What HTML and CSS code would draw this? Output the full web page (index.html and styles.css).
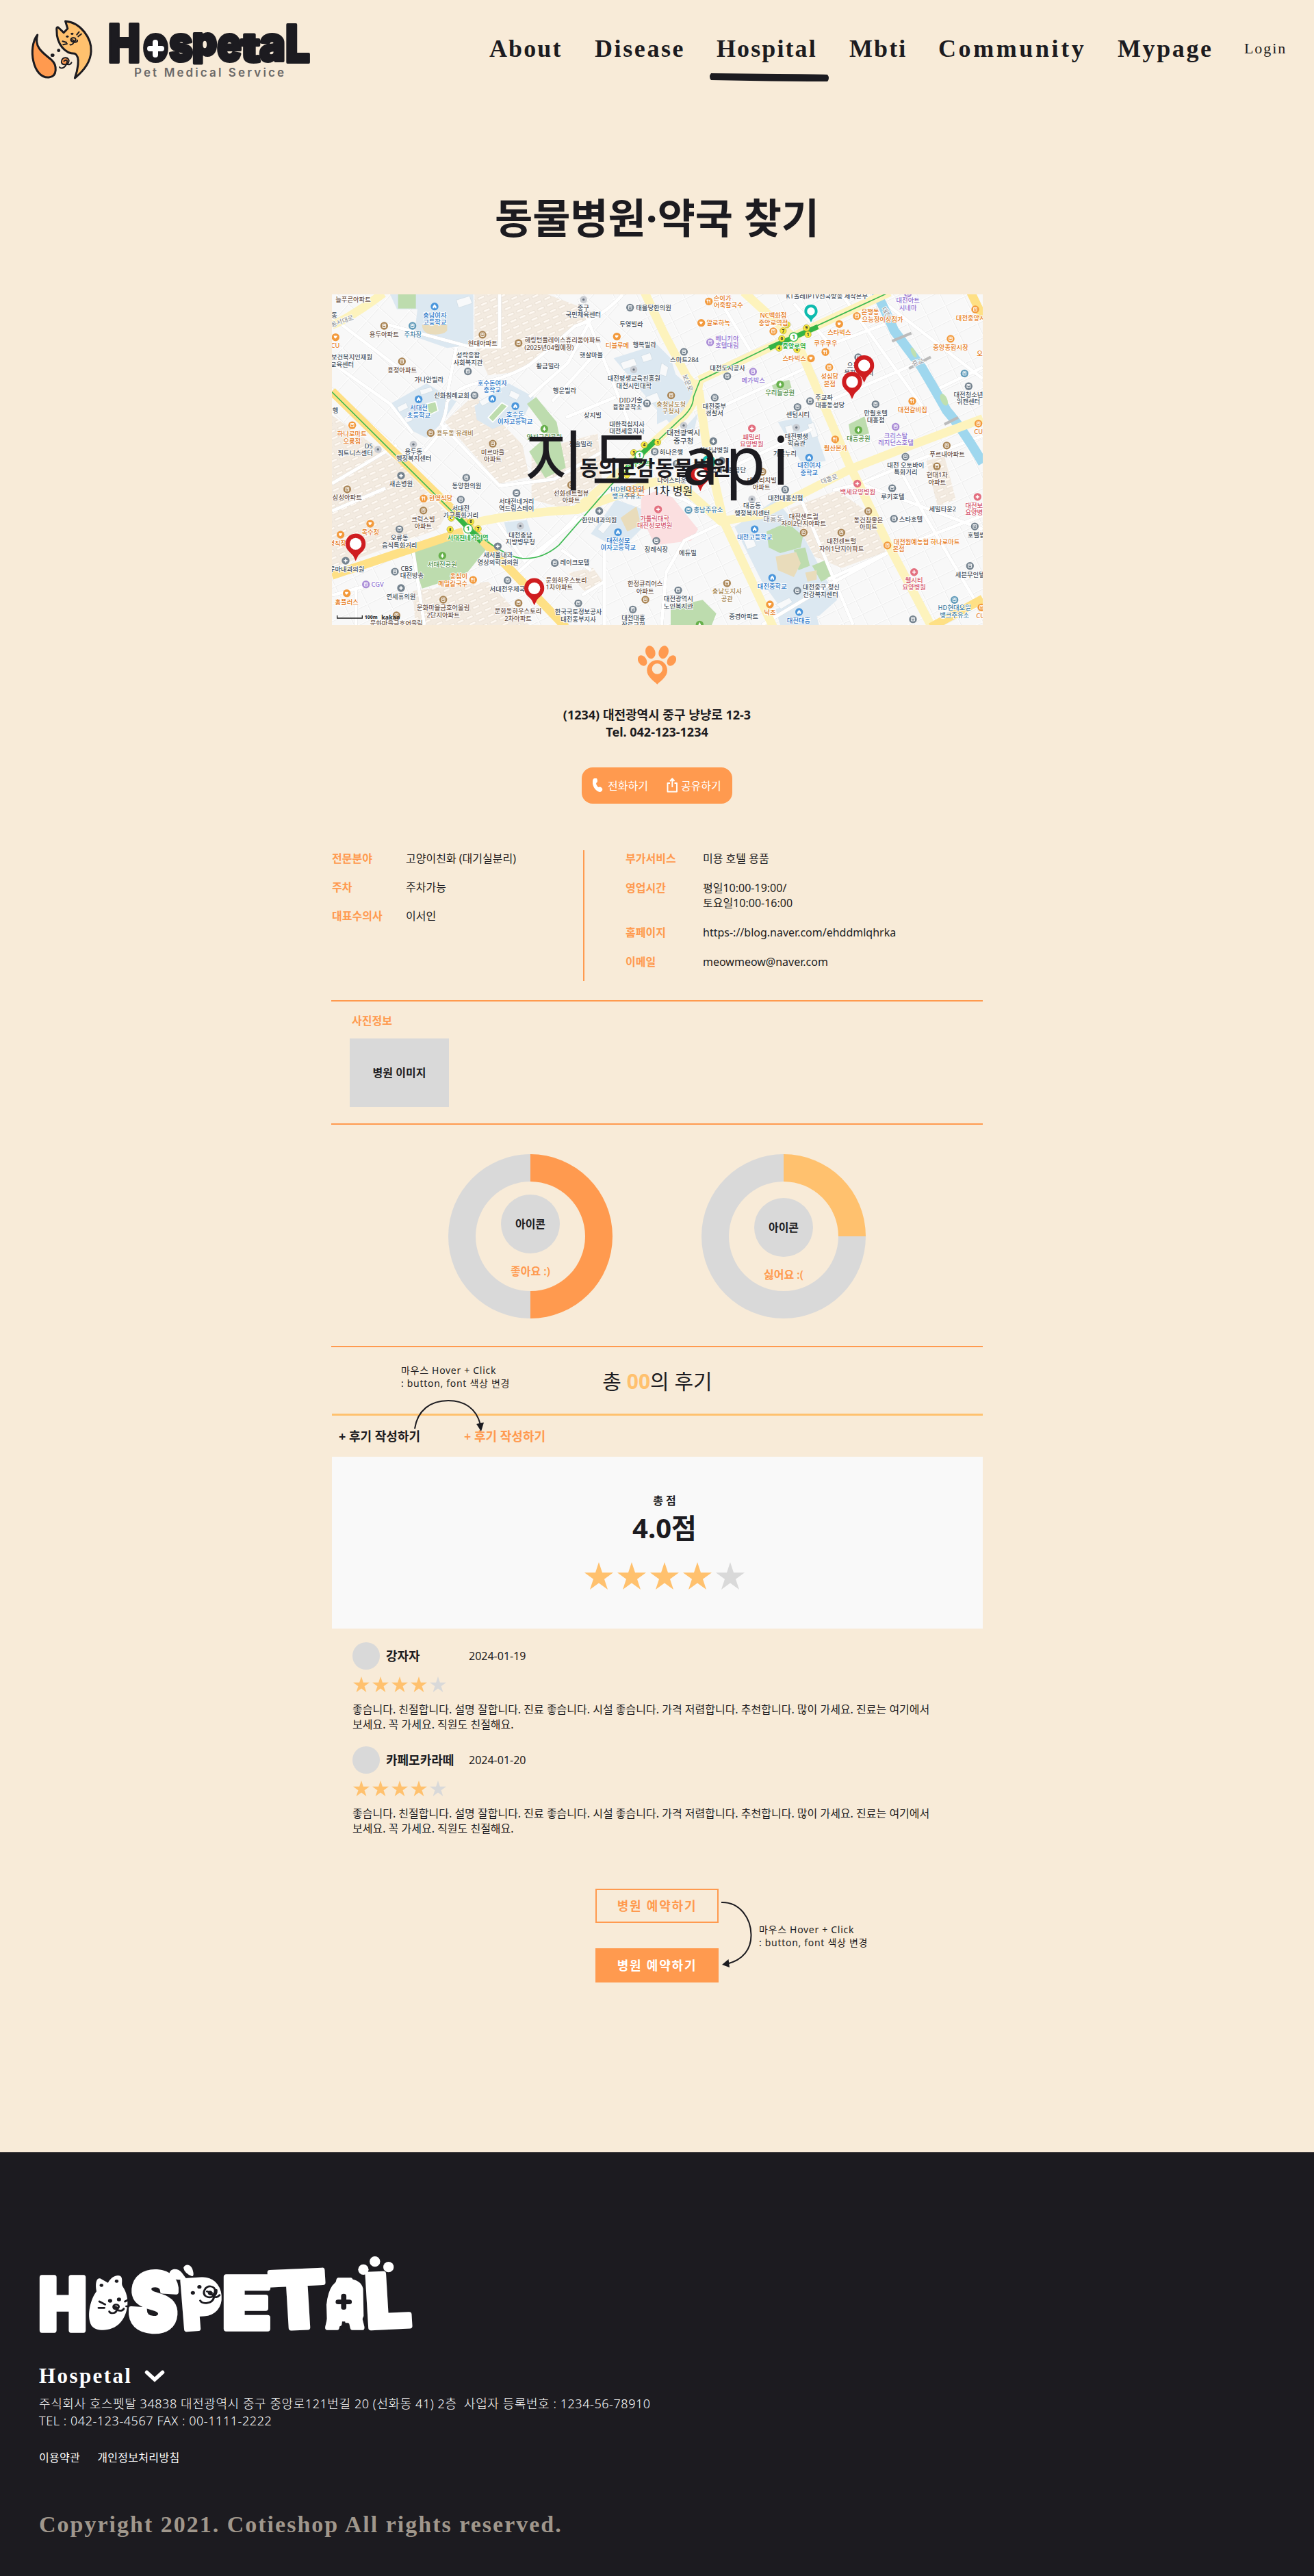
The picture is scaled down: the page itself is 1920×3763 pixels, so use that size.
FILE: index.html
```html
<!DOCTYPE html>
<html lang="ko">
<head>
<meta charset="utf-8">
<title>Hospetal</title>
<link rel="stylesheet" href="styles.css">
</head>
<body>
<header class="header">
  <svg class="logo" width="480" height="144" viewBox="0 0 480 144" role="img" aria-label="Hospetal">
    <g transform="scale(.4082 .3333)" class="mark">
      <path class="cat" d="M234 93C290 98 329 170 326 225C324 280 292 318 268 342C276 315 290 248 268 235C235 236 202 195 203 133C201 118 207 117 211 123L228 143L242 125Z"/>
      <path class="ear" d="M134 153C98 208 118 345 175 339C206 335 205 285 184 262C160 237 120 210 134 153Z"/>
      <g class="ln"><path d="M275 152l8-12M280 160l11-11M224 181l14 5M226 196l14-4"/><path d="M254 178c-5-12 15-18 17-6c1 12-15 14-17 6c6-6 13-2 9 10c-3 8-10 9-12 8M264 184c8 4 14-2 13-8"/></g>
      <path class="nose" d="M220 272c-1-28 32-22 26-1c-5 17-25 15-26 1z"/>
      <path class="ln" d="M229 268c8-8 15-6 9 12c-7 22-22 20-25 14M238 279c8 8 16 2 18-5"/>
      <g class="dots"><ellipse cx="241" cy="160" rx="5" ry="5"/><ellipse cx="258" cy="148" rx="5" ry="5"/><ellipse cx="188" cy="242" rx="7" ry="7"/><ellipse cx="210" cy="221" rx="6" ry="7"/></g>
    </g>
    <g class="word">
      <text x="158" y="91" font-size="77" textLength="47" lengthAdjust="spacingAndGlyphs">H</text>
      <text x="209" y="89" font-size="71" textLength="37" lengthAdjust="spacingAndGlyphs">o</text>
      <text x="247" y="89" font-size="71" textLength="35" lengthAdjust="spacingAndGlyphs">s</text>
      <text x="281" y="81" font-size="58" textLength="36" lengthAdjust="spacingAndGlyphs">p</text>
      <text x="317" y="89" font-size="71" textLength="36" lengthAdjust="spacingAndGlyphs">e</text>
      <text x="352" y="90" font-size="58" textLength="28" lengthAdjust="spacingAndGlyphs">t</text>
      <text x="379" y="89" font-size="71" textLength="38" lengthAdjust="spacingAndGlyphs">a</text>
      <text x="417" y="91" font-size="75" textLength="36" lengthAdjust="spacingAndGlyphs">L</text>
    </g>
    <ellipse cx="227" cy="70" rx="14" ry="18" fill="#1c1b20"/>
    <path d="M227 62v18M219 71h17" stroke="#fff" stroke-width="8" stroke-linecap="round"/>
    <text class="tag" x="196" y="112" textLength="219">Pet Medical Service</text>
  </svg>
  <nav class="nav">
    <a>About</a><a class="w1">Disease</a><a class="on">Hospital<svg width="176" height="14" viewBox="0 0 176 14"><path d="M3 0L100 1Q150 1 173 2Q177 7 173 12Q120 12 60 11L3 10Q-1 5 3 0Z" fill="#1c1b20"/></svg></a><a>Mbti</a><a class="w2">Community</a><a class="w1">Mypage</a><a class="login">Login</a>
  </nav>
</header>

<main class="main">
  <h1>동물병원·약국 찾기</h1>

  <div class="map">
    <svg width="951" height="483" viewBox="15 30 2853 1450" preserveAspectRatio="none">
      <defs>
        <pattern id="blk" width="92" height="66" patternUnits="userSpaceOnUse" patternTransform="rotate(-26)"><rect width="92" height="66" fill="#f8f8f8"/><path d="M0 0H92M0 0V66" stroke="#e2e2e2" stroke-width="10"/><path d="M0 0H92M0 0V66" stroke="#fff" stroke-width="7"/></pattern>
        <pattern id="blk2" width="80" height="110" patternUnits="userSpaceOnUse" patternTransform="rotate(-48)"><rect width="80" height="110" fill="#f8f8f8"/><path d="M0 0H80M0 0V110" stroke="#e2e2e2" stroke-width="10"/><path d="M0 0H80M0 0V110" stroke="#fff" stroke-width="7"/></pattern>
        <pattern id="apt" width="44" height="30" patternUnits="userSpaceOnUse" patternTransform="rotate(-24)"><rect width="44" height="30" fill="#f3ebe1"/><rect x="6" y="8" width="30" height="10" fill="#fffaf4" stroke="#e4dacd" stroke-width="2"/></pattern>
        <g id="b"><circle cx="18" cy="18" r="17" fill="currentColor"/><path d="M11 10h14v15H11zM18 11v5M13 16h10" fill="none" stroke="#fff" stroke-width="3"/></g>
        <g id="h"><circle cx="18" cy="18" r="17" fill="currentColor"/><path d="M18 10v16M10 18h16" stroke="#fff" stroke-width="5"/></g>
        <g id="s"><circle cx="18" cy="18" r="17" fill="currentColor"/><path d="M18 8l8 10v8h-6v-5h-4v5h-6v-8z" fill="#fff"/></g>
        <g id="t"><circle cx="18" cy="18" r="17" fill="currentColor"/><path d="M18 7l7 15h-5v5h-4v-5h-5z" fill="#fff"/></g>
        <g id="f"><circle cx="18" cy="18" r="17" fill="currentColor"/><path d="M13 9v18M10 10v6h6v-6M23 27V10q-4 4-2 8" fill="none" stroke="#fff" stroke-width="3"/></g>
        <g id="c"><circle cx="18" cy="18" r="17" fill="currentColor"/><path d="M10 12h12q6 1 0 7q-2 5-6 5q-6-2-6-12z" fill="#fff"/></g>
        <g id="o"><circle cx="18" cy="18" r="16" fill="#c9ccd2"/><circle cx="18" cy="18" r="5" fill="#6a7480"/></g>
        <symbol id="pin" viewBox="0 0 90 122"><path d="M45 1C20 1 1 20 1 46C1 72 22 84 34 98L45 121L56 98C68 84 89 72 89 46C89 20 70 1 45 1Z" fill="currentColor"/><circle cx="45" cy="46" r="26" fill="#fff"/></symbol>
      </defs>
      <rect x="15" y="30" width="2853" height="1450" fill="url(#blk2)"/>
      <path d="M1210 30H2868V1480H1130L1300 1000L1620 450L1420 200ZM15 1260L500 1120L860 1260L1000 1480H15Z" fill="url(#blk)"/>
      <g class="apt">
        <path d="M640 30H960L1170 110L980 250L830 370L700 385L655 290L640 240ZM15 560L310 770L520 990L480 1060L15 1230ZM510 590L640 470L850 690L880 830L750 860ZM370 1330L700 1290L880 1480H380ZM890 720L1180 640L1200 850L1040 970L890 930ZM2020 970L2230 890L2430 1030L2440 1160L2250 1230L2130 1180ZM2620 760L2700 740L2750 930L2670 960ZM1050 1250L1160 1230L1210 1300L1120 1330Z"/>
      </g>
      <g fill="#dce8f1">
        <path d="M270 30H635V250L520 265L375 215L390 95L300 95ZM270 510L430 420L560 500L500 590L430 660L370 630L310 560ZM640 520L790 420L900 480L860 560L720 620L650 580ZM1250 310L1440 250L1500 310L1540 440L1620 450L1590 540L1500 600L1410 500ZM770 1030L870 1020L900 1110L800 1140ZM1440 280L1520 380L1590 440L1560 540L1440 600ZM1620 550L1600 640L1540 640ZM1970 590L2110 560L2180 760L2080 780ZM1780 1050L1960 930L2060 1050L2230 1370L2150 1440L2000 1430L1900 1290ZM1960 1410L2120 1360L2150 1480H1980ZM1150 1080L1260 930L1370 970L1380 1050L1280 1150Z"/>
      </g>
      <g fill="#f8f9fa" stroke="#ccd9e3" stroke-width="2">
        <path d="M560 55l58-18l12 32l-60 20zM300 525l40-20l10 22l-40 20zM400 450l50-14l8 18l-52 18zM330 570l30-12l10 24l-30 12zM660 500l40-24l14 22l-40 22zM800 450l40 20l-14 24l-36-18zM1280 330l60-20l12 30l-60 20zM1370 300l40-14l10 30l-40 12zM1390 480l50-20l14 34l-46 20zM1460 330l30 20l-10 40l-30-10zM2000 610l30-8l24 80l-28 8zM2100 600l26-8l20 60l-26 8zM1820 1110l40-16l16 40l-40 14zM1960 1390l60-30l14 20l-50 30zM2000 1060l30-14l20 40l-30 14zM1180 1060l40-50l24 20l-40 50z"/>
      </g>
      <g fill="#bddcae">
        <path d="M870 510L910 480L1000 590L1040 790L950 835L880 720L960 650L930 590ZM360 1160L480 1110L640 1095L690 1150L600 1260L410 1320ZM1920 1070L2010 1030L2080 1090L2070 1140L1980 1165L1930 1140ZM1940 420L2020 405L2030 440L1960 470ZM2280 600L2350 565L2370 640L2290 660ZM1500 1400L1640 1370L1700 1430L1680 1480H1500ZM2120 1220L2180 1195L2215 1260L2160 1290ZM2040 1150L2090 1140L2110 1220L2060 1240Z"/>
        <rect x="305" y="30" width="78" height="62"/>
        <path d="M700 570L760 505L785 520L720 590ZM430 510L470 500L480 540L440 560Z" stroke="#fff" stroke-width="5"/>
      </g>
      <path d="M410 160H520V190Q500 210 450 205Q410 200 410 160ZM1960 1180L2050 1160L2070 1210L2040 1270L1970 1240ZM1280 1010L1350 960L1370 1040L1310 1070ZM2090 1250L2140 1240V1280L2100 1290Z" fill="#e9dcbb"/>
      <path d="M1370 920L1440 890L1500 910L1620 1060L1590 1110L1430 1130L1370 1000Z" fill="#fbdfe0"/>
      <g class="wr"><path d="M520 500Q560 440 650 420Q780 400 880 340Q980 260 1080 170Q1200 130 1290 30M520 500Q515 560 495 600L750 870L990 840L1200 720M15 860L300 690M15 980L250 880M420 720L520 600M15 330L270 510L370 640M15 130L330 370M250 160L620 260H750V30M560 260L520 470M880 480L1050 330L1170 100M1100 50L1220 350L1320 600M980 500L1160 300M1040 570L1260 480M720 1000L860 1200L1000 1090L1120 1000M370 1150L420 1480M15 1350L160 1310M120 1310V1480M830 1250Q1010 1090 1090 1000M1020 1150L1150 1240M1210 1150V1480M1110 1350L1210 1290M1700 30L1850 280M2040 70L2200 250L2440 160M2140 520L2560 340M1640 560L2100 350M1700 820L2120 620M1850 1290L1730 1030L1560 1110L1480 1250L1460 1480M1720 1030L1560 930L1440 890M2210 890L2330 860L2500 790L2620 1010L2868 1430M2330 860L2868 1060M2190 1280L2500 1140L2868 1000M2520 780L2868 650M2390 30L2868 400M2250 30L2630 560M2660 450L2868 350M2060 900L2220 1290L2300 1480M1900 1480L2200 1300L2460 1160"/></g>
      <path d="M2400 20Q2450 120 2480 190L2600 350Q2660 450 2710 540Q2780 620 2868 770" fill="none" stroke="#9fd7ee" stroke-width="42"/>
      <g fill="#bfe0b0"><ellipse cx="2565" cy="285" rx="9" ry="24" transform="rotate(-25 2565 285)"/><ellipse cx="2698" cy="492" rx="14" ry="28" transform="rotate(-25 2698 492)"/></g>
      <g fill="none" class="yr">
        <path d="M620 1035Q850 985 1090 975L1420 855Q1500 830 1570 890L1720 1025L1900 995L2290 795L2560 690L2868 575M1090 970L1300 790L1560 560Q1620 490 1625 405M1385 20L1470 200L1570 390L1625 460L1655 680L1730 1020L1950 1490M1820 20L2050 230L2280 770L2450 1120L2640 1480M1625 405L2460 20"/>
        <path class="y2" d="M15 455L300 735L570 1000L1040 1490M15 1262L590 1070M2640 1490L2868 1365M2815 20L2868 130"/>
        <path d="M15 165Q100 130 240 25"/>
      </g>
      <path d="M2470 235L2555 200M2545 355L2640 305M2700 600L2760 570" stroke="#bbb" stroke-width="12"/>
      <path d="M15 458L560 1000L690 1110Q800 1190 860 1188Q940 1190 1010 1130L1240 865L1440 675L1540 580Q1600 530 1600 480L1628 408L1930 262L2110 182L2450 25" fill="none" stroke="#3fba53" stroke-width="5"/>
      <path d="M560 1000L670 1115M1300 800L1435 670M1932 265L2145 172" stroke="#35b445" stroke-width="22"/>
      <g class="ex"><circle cx="564" cy="985" r="14"/><circle cx="538" cy="1011" r="14"/><circle cx="624" cy="1027" r="14"/><circle cx="656" cy="1058" r="14"/><circle cx="533" cy="1061" r="14"/><circle cx="1443" cy="679" r="14"/><circle cx="1384" cy="690" r="14"/><circle cx="1338" cy="724" r="14"/><circle cx="1308" cy="822" r="14"/><circle cx="2010" cy="163" r="14"/><circle cx="1993" cy="190" r="14"/><circle cx="1987" cy="224" r="14"/><circle cx="2095" cy="177" r="14"/><circle cx="2102" cy="206" r="14"/><circle cx="1975" cy="266" r="14"/><circle cx="2053" cy="272" r="14"/></g>
      <g class="n"><text x="564" y="992">5</text><text x="538" y="1018">4</text><text x="624" y="1034">6</text><text x="656" y="1065">7</text><text x="533" y="1068">3</text><text x="1443" y="686">1</text><text x="1384" y="697">4</text><text x="1338" y="731">3</text><text x="2010" y="170">8</text><text x="1993" y="197">7</text><text x="1987" y="231">6</text><text x="2095" y="184">9</text><text x="2102" y="213">1</text><text x="1975" y="273">4</text><text x="2053" y="279">3</text></g>
      <g fill="#fff" stroke="#3fba53" stroke-width="4"><circle cx="612" cy="1058" r="19"/><circle cx="1363" cy="736" r="19"/><circle cx="2039" cy="217" r="19"/></g>
      <g class="lb st"><text x="612" y="1067">1</text><text x="1363" y="745">1</text><text x="2039" y="226">1</text><text x="611" y="1108">서대전네거리역</text><text x="1360" y="785">중구청역</text><text x="2041" y="268">중앙로역</text></g>

      <g class="ic gy">
        <use href="#o" x="1100" y="35"/><use href="#b" x="1304" y="70"/><use href="#b" x="593" y="350"/><use href="#o" x="1320" y="342"/><use href="#b" x="622" y="455"/><use href="#b" x="1378" y="490"/><use href="#o" x="199" y="692"/><use href="#o" x="354" y="670"/><use href="#h" x="300" y="807"/><use href="#b" x="586" y="816"/><use href="#b" x="562" y="912"/><use href="#b" x="806" y="883"/><use href="#b" x="1412" y="702"/><use href="#h" x="1169" y="962"/><use href="#b" x="293" y="1042"/><use href="#o" x="823" y="1028"/><use href="#h" x="724" y="1117"/><use href="#h" x="57" y="1180"/><use href="#b" x="273" y="1228"/><use href="#b" x="974" y="1190"/><use href="#b" x="767" y="1266"/><use href="#h" x="300" y="1300"/><use href="#b" x="1077" y="1367"/><use href="#b" x="1316" y="1394"/><use href="#b" x="1419" y="1093"/><use href="#b" x="1540" y="264"/><use href="#b" x="1730" y="371"/><use href="#b" x="1675" y="465"/><use href="#b" x="2038" y="506"/><use href="#b" x="2093" y="480"/><use href="#o" x="2033" y="596"/><use href="#h" x="1669" y="656"/><use href="#b" x="2380" y="494"/><use href="#b" x="2304" y="288"/><use href="#b" x="2788" y="415"/><use href="#b" x="2511" y="724"/><use href="#b" x="2453" y="862"/><use href="#b" x="1984" y="868"/><use href="#o" x="1838" y="910"/><use href="#o" x="1539" y="587"/><use href="#b" x="2461" y="996"/><use href="#b" x="2815" y="1030"/><use href="#b" x="2794" y="1203"/><use href="#b" x="1515" y="1310"/><use href="#b" x="2037" y="1312"/><use href="#b" x="2544" y="1437"/><use href="#b" x="1508" y="755"/><use href="#h" x="1705" y="742"/>
      </g>
      <g class="ic br"><use href="#b" x="226" y="150"/><use href="#b" x="657" y="189"/><use href="#b" x="815" y="226"/><use href="#b" x="304" y="306"/><use href="#b" x="430" y="620"/><use href="#b" x="702" y="667"/><use href="#b" x="64" y="867"/><use href="#b" x="398" y="960"/><use href="#b" x="485" y="1351"/><use href="#b" x="815" y="1366"/><use href="#b" x="1371" y="1351"/><use href="#b" x="1046" y="848"/><use href="#b" x="280" y="1420"/><use href="#b" x="1484" y="455"/><use href="#b" x="2692" y="675"/><use href="#b" x="2649" y="766"/><use href="#b" x="2348" y="963"/><use href="#b" x="2230" y="1057"/><use href="#b" x="2065" y="1057"/><use href="#b" x="1729" y="1279"/><use href="#b" x="1884" y="790"/></g>
      <g class="ic or"><use href="#c" x="1246" y="197"/><use href="#c" x="13" y="200"/><use href="#b" x="86" y="586"/><use href="#f" x="399" y="907"/><use href="#c" x="165" y="1018"/><use href="#c" x="35" y="1066"/><use href="#f" x="616" y="1264"/><use href="#c" x="62" y="1323"/><use href="#f" x="1649" y="43"/><use href="#c" x="1616" y="137"/><use href="#b" x="1932" y="174"/><use href="#c" x="2221" y="142"/><use href="#b" x="2298" y="107"/><use href="#f" x="2160" y="265"/><use href="#c" x="2097" y="293"/><use href="#b" x="2177" y="332"/><use href="#f" x="2203" y="648"/><use href="#f" x="2541" y="480"/><use href="#b" x="2709" y="207"/><use href="#b" x="2817" y="78"/><use href="#b" x="2831" y="579"/><use href="#b" x="2432" y="1113"/><use href="#c" x="1917" y="1372"/><use href="#b" x="2844" y="1385"/></g>
      <g class="ic bl"><use href="#s" x="447" y="65"/><use href="#s" x="377" y="472"/><use href="#s" x="700" y="470"/><use href="#s" x="801" y="502"/><use href="#s" x="1251" y="1055"/><use href="#s" x="2089" y="728"/><use href="#s" x="1850" y="1042"/><use href="#s" x="1927" y="1255"/><use href="#s" x="2045" y="1405"/></g>
      <g class="ic tl"><use href="#b" x="350" y="150"/><use href="#b" x="1560" y="958"/><use href="#b" x="2770" y="359"/><use href="#b" x="2726" y="1352"/></g>
      <g class="ic gn"><use href="#t" x="928" y="602"/><use href="#t" x="481" y="1158"/><use href="#t" x="1962" y="407"/><use href="#t" x="2305" y="607"/><use href="#t" x="1609" y="1460"/></g>
      <g class="ic pk"><use href="#h" x="1427" y="955"/><use href="#h" x="1838" y="600"/><use href="#h" x="2300" y="842"/><use href="#h" x="2549" y="1230"/><use href="#h" x="2827" y="900"/></g>
      <g class="ic vi"><use href="#b" x="146" y="1284"/><use href="#b" x="1843" y="351"/><use href="#b" x="1655" y="222"/><use href="#b" x="2468" y="593"/><use href="#b" x="2522" y="8"/></g>

      <g class="lb">
        <text x="108" y="63" class="br">늘푸른아파트</text><text x="26" y="131">동</text><text x="60" y="158" class="ro" transform="rotate(-20 60 148)">동서대로</text>
        <text x="1117" y="99">중구</text><text x="1117" y="130">국민체육센터</text><text x="1425" y="99">태을당한의원</text><text x="1327" y="170">두영빌라</text><text x="1385" y="260">행복빌라</text><text x="1152" y="307">햇살마을</text><text x="962" y="354">황금빌라</text>
        <text x="612" y="307">성락종합</text><text x="612" y="338">사회복지관</text><text x="440" y="415">가나안빌라</text><text x="540" y="482">선화침례교회</text><text x="1035" y="463">행운빌라</text><text x="1339" y="408">대전평생교육진흥원</text><text x="1339" y="441">대전시민대학</text><text x="1325" y="503">DID기술</text><text x="1310" y="535">융합공작소</text><text x="1158" y="571">상지빌</text><text x="1308" y="608">대한적십지사</text><text x="1308" y="640">대전세종지사</text><text x="1105" y="697">청솔빌라</text>
        <text x="102" y="315">보건복지인재원</text><text x="60" y="347">교육센터</text><text x="30" y="548">행</text><text x="176" y="705">DS</text><text x="117" y="735">휘트니스센터</text><text x="373" y="728">용두동</text><text x="374" y="759">행정복지센터</text><text x="318" y="872">새손병원</text><text x="606" y="881">동양한의원</text><text x="580" y="979">서대전</text><text x="580" y="1010">가구특화거리</text><text x="824" y="949">서대전네거리</text><text x="824" y="980">역드림스테이</text><text x="311" y="1109">오류동</text><text x="311" y="1140">음식특화거리</text><text x="841" y="1095">대전충남</text><text x="841" y="1127">지방병무청</text><text x="743" y="1184">새서울내과</text><text x="743" y="1215">영상의학과의원</text><text x="1187" y="1030">한민내과의원</text><text x="80" y="1245">루마내과의원</text><text x="342" y="1243">CBS</text><text x="366" y="1274">대전방송</text><text x="1080" y="1217">레이크모텔</text><text x="784" y="1332">서대전우체국</text><text x="318" y="1365">연세휴의원</text><text x="1095" y="1433">한국국토정보공사</text><text x="1095" y="1464">대전동부지사</text><text x="1336" y="1458">대전대흥</text><text x="1336" y="1489">장로교회</text><text x="1437" y="1159">장례식장</text>
        <text x="2185" y="47">KT올레IPTV전국방송 제작본부</text><text x="1560" y="327">스마트284</text><text x="1749" y="363">대전도시공사</text><text x="1692" y="530">대전중부</text><text x="1692" y="561">경찰서</text><text x="1556" y="648" class="lg">대전광역시</text><text x="1556" y="685" class="lg">중구청</text><text x="1690" y="722">참다남병원</text><text x="1503" y="731">하나은행</text><text x="1505" y="855">나이스타운</text><text x="1740" y="810">중앙새마을공단</text><text x="2172" y="493">주교좌</text><text x="2198" y="524">대흥동성당</text><text x="2058" y="568">센텀시티</text><text x="2052" y="662">대전평생</text><text x="2052" y="693">학습관</text><text x="2001" y="737">가온누리</text><text x="2399" y="560">만월호텔</text><text x="2399" y="591">대흥점</text><text x="2325" y="352">으능정이</text><text x="2325" y="384">문화의거리</text><text x="2805" y="480">대전청소년</text><text x="2805" y="511">위캔센터</text><text x="2530" y="790">대전 오토바이</text><text x="2530" y="820">특화거리</text><text x="2473" y="928">루키호텔</text><text x="2003" y="933">대전대흥신협</text><text x="1857" y="967">대흥동</text><text x="1857" y="999">행정복지센터</text><text x="1950" y="1026" class="lg ro">대흥동</text><text x="2553" y="1026">스타호텔</text><text x="2692" y="982">세빌타운2</text><text x="2840" y="1096">호텔썸</text><text x="2812" y="1269">세븐무인텔</text><text x="1575" y="1174">에듀빌</text><text x="1534" y="1375">대전광역시</text><text x="1534" y="1407">노인복지관</text><text x="1820" y="1452">중경아파트</text><text x="2160" y="1325">대전중구 정신</text><text x="2157" y="1356">건강복지센터</text><text x="1575" y="428" class="ro" transform="rotate(68 1575 418)">보문로</text><text x="2195" y="850" class="ro" transform="rotate(-20 2195 840)">대흥로</text><text x="2583" y="338" class="ro" transform="rotate(-20 2583 328)">중교</text><text x="2445" y="120" class="ro" transform="rotate(62 2445 110)">대전</text>
      </g>
      <g class="lb brt">
        <text x="244" y="215">용두아파트</text><text x="676" y="254">현대아파트</text><text x="1027" y="240">해링턴플레이스휴리움아파트</text><text x="967" y="272">(2025년04월예정)</text><text x="323" y="373">용정아파트</text><text x="720" y="733">미르마을</text><text x="720" y="764">아파트</text><text x="82" y="932">삼성아파트</text><text x="415" y="1027">크럭스빌</text><text x="415" y="1058">아파트</text><text x="1064" y="912">선화센트럴뷰</text><text x="1064" y="944">아파트</text><text x="1043" y="1294">문화하우스토리</text><text x="1012" y="1325">1차아파트</text><text x="831" y="1430">문화동하우스토리</text><text x="831" y="1461">2차아파트</text><text x="503" y="1415">문화마을금호어울림</text><text x="503" y="1447">2단지아파트</text><text x="298" y="1482">문화마을금호어울림</text><text x="1388" y="1310">한정큐리어스</text><text x="1388" y="1341">아파트</text><text x="1900" y="856">대림리치빌</text><text x="1898" y="887">아파트</text><text x="2712" y="741">푸르내아파트</text><text x="2668" y="832">현대1차</text><text x="2668" y="864">아파트</text><text x="2367" y="1029">동건참좋은</text><text x="2367" y="1060">아파트</text><text x="2083" y="1015">대전센트럴</text><text x="2083" y="1046">자이2단지아파트</text><text x="2249" y="1122">대전센트럴</text><text x="2249" y="1155">자이1단지아파트</text>
      </g>
      <g class="lb ol"><text x="555" y="648">용두동 유래비</text><text x="1502" y="521">충청남도청</text><text x="1502" y="551">구청사</text><text x="1747" y="1342">충남도지사</text><text x="1747" y="1374">공관</text></g>
      <g class="lb or"><text x="1266" y="263">디블루메</text><text x="30" y="265">CU</text><text x="103" y="651">하나로마트</text><text x="103" y="683">오룡점</text><text x="492" y="935">현영식당</text><text x="184" y="1083">목수정</text><text x="40" y="1132">명직장</text><text x="571" y="1276">옹심이</text><text x="545" y="1309">메밀칼국수</text><text x="80" y="1389">홈플러스</text><text x="1727" y="56">손이가</text><text x="1753" y="87">어죽칼국수</text><text x="1709" y="166">알로하녹</text><text x="1950" y="132">NC백화점</text><text x="1950" y="164">중앙로역점</text><text x="2239" y="207">스타벅스</text><text x="2375" y="118">은행동</text><text x="2429" y="151">으능정이상점가</text><text x="2179" y="255">쿠우쿠우</text><text x="2042" y="322">스타벅스</text><text x="2197" y="399">성심당</text><text x="2197" y="431">본점</text><text x="2223" y="714">월산본가</text><text x="2560" y="545">대전갈비집</text><text x="2727" y="273">중앙종합시장</text><text x="2815" y="144">대전중앙시</text><text x="2855" y="299">오</text><text x="2849" y="643">CU</text><text x="2622" y="1125">대전원예농협 하나로마트</text><text x="2499" y="1156">본점</text><text x="1935" y="1436">낙조</text><text x="2858" y="1450">CU</text></g>
      <g class="lb bl"><text x="466" y="131">충남여자</text><text x="466" y="163">고등학교</text><text x="718" y="428">호수돈여자</text><text x="718" y="458">중학교</text><text x="396" y="537">서대전</text><text x="396" y="569">초등학교</text><text x="818" y="567">호수돈</text><text x="818" y="598">여자고등학교</text><text x="1270" y="1119">대전성모</text><text x="1270" y="1151">여자고등학교</text><text x="2107" y="791">대전여자</text><text x="2107" y="822">중학교</text><text x="1868" y="1105">대전고등학교</text><text x="1945" y="1320">대전중학교</text><text x="2061" y="1472">대전대흥</text></g>
      <g class="lb tl"><text x="370" y="215">주차장</text><text x="1308" y="894">HD현대오일</text><text x="1308" y="924">뱅크주유소</text><text x="1665" y="985">충남주유소</text><text x="2744" y="1415">HD현대오일</text><text x="2744" y="1446">뱅크주유소</text></g>
      <g class="lb gn"><text x="946" y="666">양지근린공원</text><text x="499" y="1225">서대전공원</text><text x="1979" y="472">우리들공원</text><text x="2323" y="673">대흥공원</text></g>
      <g class="lb pk"><text x="1430" y="1024">가톨릭대학</text><text x="1430" y="1055">대전성모병원</text><text x="1855" y="665">패밀리</text><text x="1855" y="696">요양병원</text><text x="2320" y="907">백세요양병원</text><text x="2567" y="1295">웰시티</text><text x="2567" y="1325">요양병원</text><text x="2830" y="966">대전보</text><text x="2830" y="998">요양병</text></g>
      <g class="lb vi"><text x="215" y="1311">CGV</text><text x="1747" y="234">베니키아</text><text x="1747" y="265">호텔대림</text><text x="1862" y="416">메가박스</text><text x="2487" y="659">크리스탈</text><text x="2487" y="690">레지던스호텔</text><text x="2540" y="67">대전아트</text><text x="2540" y="98">시네마</text></g>
      <path d="M38 1438v12h110v-12" fill="none" stroke="#222" stroke-width="4"/>
      <g class="kk"><text x="158" y="1454" font-size="21">100m</text><text x="232" y="1456" font-size="26">kakao</text></g>
      <g color="#cf1d20"><use href="#pin" x="74" y="1078" width="90" height="122"/><use href="#pin" x="857" y="1273" width="90" height="122"/><use href="#pin" x="2303" y="296" width="90" height="122"/><use href="#pin" x="2250" y="368" width="90" height="122"/></g>
      <g color="#0fbbaf"><use href="#pin" x="2085" y="74" width="60" height="80"/><use href="#pin" x="1637" y="735" width="60" height="80"/></g>
      <use href="#pin" x="1585" y="772" width="90" height="122" color="#cf1d20"/>
    </svg>
    <p class="map-api">지도 api</p>
    <p class="map-name">동의보감동물병원</p>
    <p class="map-kind"><span>일반</span> <i></i> 1차 병원</p>
  </div>

  <svg class="paw" width="56" height="57" viewBox="0 0 168 171"><g fill="#ff9a4f"><ellipse cx="55" cy="29" rx="21" ry="29" transform="rotate(-17 55 29)"/><ellipse cx="113" cy="29" rx="21" ry="29" transform="rotate(17 113 29)"/><ellipse cx="20" cy="66" rx="18" ry="25" transform="rotate(-33 20 66)"/><ellipse cx="148" cy="66" rx="18" ry="25" transform="rotate(33 148 66)"/><path fill-rule="evenodd" d="M85 64C59 64 40 84 40 109C40 136 66 152 85 170C104 152 129 136 129 109C129 84 110 64 85 64ZM85 79A23 23 0 1 1 85 125A23 23 0 1 1 85 79Z"/></g></svg>

  <address>(1234) 대전광역시 중구 냥냥로 12-3<br>Tel. 042-123-1234</address>

  <div class="actions">
    <svg width="15" height="20" viewBox="0 0 15 20"><path d="M3 0C6-1 7 1 7 4C7 6 5 6 5 8C6 11 8 13 9 13C11 12 13 13 14 15C15 17 13 20 10 20C4 18-1 11 0 4C0 2 1 0 3 0Z" fill="#fff"/></svg><span class="call">전화하기</span>
    <svg width="17" height="22" viewBox="0 0 17 22"><path d="M5 8H1.5V20.5H15V8H11.500M8.300 14V2M5 5L8.300 1.500L11.500 5" fill="none" stroke="#fff" stroke-width="1.900" stroke-linejoin="round"/></svg><span>공유하기</span>
  </div>

  <section class="info">
    <dl class="left"><dt>전문분야</dt><dd>고양이친화 (대기실분리)</dd><dt>주차</dt><dd>주차가능</dd><dt>대표수의사</dt><dd>이서인</dd></dl>
    <dl class="right"><dt>부가서비스</dt><dd>미용 호텔 용품</dd><dt>영업시간</dt><dd>평일10:00-19:00/<br>토요일10:00-16:00</dd><dt>홈페이지</dt><dd>https-://blog.naver.com/ehddmlqhrka</dd><dt>이메일</dt><dd>meowmeow@naver.com</dd></dl>
  </section>

  <section class="photos"><h2>사진정보</h2><div class="photo">병원 이미지</div></section>

  <section class="charts">
    <div class="donut like"><div class="hole"><b>아이콘</b><span>좋아요 :)</span></div></div>
    <div class="donut hate"><div class="hole"><b>아이콘</b><span>싫어요 :(</span></div></div>
  </section>

  <section class="count">
    <p class="note">마우스 Hover + Click<br>: button, font 색상 변경</p>
    <p class="total">총 <b>00</b>의 후기</p>
    <svg class="arc" width="110" height="50" viewBox="0 0 110 50"><path d="M6 44C10 17 29 3 55 3C78 3 96 14 102 38" fill="none" stroke="#1c1b20" stroke-width="2"/><path d="M96 37l11-2l-4 13z" fill="#1c1b20"/></svg>
  </section>

  <div class="write"><a>+ 후기 작성하기</a><a class="hover">+ 후기 작성하기</a></div>

  <svg class="defs" width="0" height="0"><symbol id="star" viewBox="0 0 42 40"><path d="M21 0L26 15.200H42L29 24.700L34 40L21 30.500L8 40L13 24.700L0 15.200H16Z" fill="currentColor"/></symbol></svg>

  <section class="score">
    <p class="cap">총 점</p><p class="num">4.0점</p>
    <div class="stars big"><svg><use href="#star"/></svg><svg><use href="#star"/></svg><svg><use href="#star"/></svg><svg><use href="#star"/></svg><svg class="off"><use href="#star"/></svg></div>
  </section>

  <article class="review">
    <div class="who"><i></i><b>강자자</b><time>2024-01-19</time></div>
    <div class="stars"><svg><use href="#star"/></svg><svg><use href="#star"/></svg><svg><use href="#star"/></svg><svg><use href="#star"/></svg><svg class="off"><use href="#star"/></svg></div>
    <p>좋습니다. 친절합니다. 설명 잘합니다. 진료 좋습니다. 시설 좋습니다. 가격 저렴합니다. 추천합니다. 많이 가세요. 진료는 여기에서<br>보세요. 꼭 가세요. 직원도 친절해요.</p>
  </article>
  <article class="review">
    <div class="who"><i></i><b>카페모카라떼</b><time>2024-01-20</time></div>
    <div class="stars"><svg><use href="#star"/></svg><svg><use href="#star"/></svg><svg><use href="#star"/></svg><svg><use href="#star"/></svg><svg class="off"><use href="#star"/></svg></div>
    <p>좋습니다. 친절합니다. 설명 잘합니다. 진료 좋습니다. 시설 좋습니다. 가격 저렴합니다. 추천합니다. 많이 가세요. 진료는 여기에서<br>보세요. 꼭 가세요. 직원도 친절해요.</p>
  </article>

  <section class="book">
    <div class="btns"><a>병원 예약하기</a><a class="full">병원 예약하기</a></div>
    <svg width="50" height="104" viewBox="0 0 50 104"><path d="M4 6C30 5 47 28 47.500 53C48 74 36 90 12 96" fill="none" stroke="#1c1b20" stroke-width="2"/><path d="M5 97l9.500-8l1.500 12z" fill="#1c1b20"/></svg>
    <p class="note">마우스 Hover + Click<br>: button, font 색상 변경</p>
  </section>
</main>

<footer class="footer">
  <svg class="flogo" width="600" height="160" viewBox="0 0 600 160" role="img" aria-label="Hospetal">
    <g transform="scale(.3827 .3333)">
      <g class="fword">
        <text x="70" y="402" font-size="318" textLength="182" lengthAdjust="spacingAndGlyphs">H</text>
        <text x="416" y="404" font-size="350" textLength="186" lengthAdjust="spacingAndGlyphs" transform="rotate(4 510 280)">S</text>
        <text x="615" y="393" font-size="292" textLength="152" lengthAdjust="spacingAndGlyphs" transform="rotate(-4 690 285)">P</text>
        <text x="772" y="397" font-size="314" textLength="184" lengthAdjust="spacingAndGlyphs">E</text>
        <text x="950" y="391" font-size="340" textLength="216" lengthAdjust="spacingAndGlyphs" transform="rotate(-3 1060 260)">T</text>
        <text x="1166" y="390" font-size="284" textLength="144" lengthAdjust="spacingAndGlyphs">A</text>
        <text x="1318" y="388" font-size="322" textLength="170" lengthAdjust="spacingAndGlyphs" transform="rotate(-3 1400 270)">L</text>
      </g>
      <path d="M290 232C284 195 290 172 304 175L334 194C350 160 380 154 386 172C390 190 384 198 390 210C420 260 412 330 380 370C350 408 290 412 270 380C250 335 270 260 290 232Z" fill="#fff"/>
      <path d="M630 200Q720 150 750 200Q775 270 740 305Q700 320 650 300ZM1168 290Q1178 178 1240 176Q1300 176 1308 220L1310 340L1290 395L1250 370H1240L1220 385L1170 370ZM568 156C570 128 602 128 616 150L634 178Q632 190 614 180Q570 184 568 156ZM622 128C630 108 652 112 658 140Q664 166 654 165Q626 152 622 128Z" fill="#fff"/>
      <g fill="#fff"><ellipse cx="1309" cy="136" rx="20" ry="23"/><ellipse cx="1353" cy="101" rx="20" ry="23"/><ellipse cx="1405" cy="125" rx="20" ry="23"/></g>
      <g fill="#1c1b20"><circle cx="309" cy="205" r="7"/><circle cx="367" cy="187" r="7"/><circle cx="342" cy="273" r="8"/><circle cx="376" cy="267" r="8"/><circle cx="658" cy="238" r="8"/><circle cx="683" cy="212" r="8"/></g>
      <g fill="none" stroke="#1c1b20" stroke-width="8" stroke-linecap="round"><path d="M301 276l22 13M298 304h22M399 276l10-6M404 297h6M355 302c-4-15 20-17 20-3c-2 12-18 12-20 3c8-6 18 0 12 14c-6 16-26 12-28 4M370 312c8 8 22 4 24-4"/><path d="M730 238c-10-16-18 8-2 8c18 0 22-32-2-36c-20-2-34 26-20 42c20 14 44 0 42-26M712 232c12 4 26 14 26 28c-6 26-44 30-52 12M738 254c6 6 16 2 22-6"/></g>
      <path d="M1234 252v50M1213 278h42" stroke="#1c1b20" stroke-width="20" stroke-linecap="round"/>
      <path d="M1228 364h11l10 44h-26z" fill="#1c1b20"/>
    </g>
  </svg>
  <h3>Hospetal <svg width="30" height="18" viewBox="0 0 30 18"><path d="M3.500 3.500L15 14L26.500 3.500" fill="none" stroke="#fff" stroke-width="5.500" stroke-linecap="round"/></svg></h3>
  <p class="addr">주식회사 호스펫탈 34838 대전광역시 중구 중앙로121번길 20 (선화동 41) 2층&nbsp; 사업자 등록번호 : 1234-56-78910<br>TEL : 042-123-4567 FAX : 00-1111-2222</p>
  <p class="links"><a>이용약관</a><a>개인정보처리방침</a></p>
  <p class="copy">Copyright 2021. Cotieshop All rights reserved.</p>
</footer>
</body>
</html>
```
FILE: styles.css
```css
* { box-sizing: border-box; margin: 0; padding: 0; }
body { width: 1920px; background: #f8ebd8; color: #1c1b20; font: 16px/22px "Noto Sans", "Noto Sans CJK KR", sans-serif; overflow-x: hidden; }
svg { display: block; }
i { font-style: normal; }

.header { display: flex; height: 144px; }
.logo { flex: none; margin-right: 235px; }
.mark path { stroke: #1c1b20; stroke-width: 3px; stroke-linejoin: round; stroke-linecap: round; vector-effect: non-scaling-stroke; }
.cat { fill: #ffc16e; }
.ear { fill: #ff9a4f; }
.nose { fill: #ff9a4f; }
.ln, .ln path { fill: none; }
.mark .ln path, .mark path.ln, .mark .nose { stroke-width: 2px; }
.dots { fill: #1c1b20; }
.word text { font-family: Inter, sans-serif; font-weight: 900; fill: #1c1b20; stroke: #1c1b20; stroke-width: 4px; stroke-linejoin: round; }
.tag { font: 600 17px Inter, sans-serif; fill: #6b6968; }
.nav { display: grid; grid-template-columns: 154px 178px 194px 130px 262px 185px 70px; padding-top: 46px; font: bold 36px/50px "Liberation Serif", serif; letter-spacing: 2.1px; white-space: nowrap; }
.nav a { position: relative; }
.nav .w1 { letter-spacing: 2.6px; }
.nav .w2 { letter-spacing: 3.6px; }
.nav .on svg { position: absolute; left: -11px; top: 61px; }
.nav .login { font-size: 22px; font-weight: 400; letter-spacing: 1.9px; }

.main { width: 952px; height: 3000px; margin: 0 auto; }
h1 { padding-top: 133px; height: 286px; font-size: 60px; line-height: 82px; text-align: center; white-space: nowrap; }

.map { position: relative; width: 951px; height: 483px; margin-left: 1px; overflow: hidden; }
.map p { position: absolute; white-space: nowrap; }
.map-api { left: 281px; top: 175px; font-size: 96px; line-height: 131px; letter-spacing: 9.6px; }
.map-name { left: 362px; top: 232px; font-size: 30px; line-height: 42px; font-weight: 700; }
.map-kind { left: 429px; top: 275px; font-size: 16px; line-height: 24px; }
.map-kind span { color: #ff9a4f; }
.map-kind i { display: inline-block; width: 1px; height: 12px; margin: 0 1px; background: #1c1b20; }
.lb text { font-size: 28px; text-anchor: middle; fill: #45505c; stroke: #fff; stroke-width: 5px; paint-order: stroke; font-weight: 500; }
.lb .lg { font-size: 32px; }
.lb .ro { fill: #9a9ca0; }
.apt { fill: url(#apt); }
.wr path { fill: none; stroke: #fff; stroke-width: 15px; filter: drop-shadow(0 0 1.5px #bbb); }
.yr path { stroke: #fdf3bd; stroke-width: 38px; stroke-linejoin: round; }
.yr .y2 { stroke: #fee085; }
.ex { fill: #f8e93f; stroke: #a59b2f; stroke-width: 2px; }
.n text { font-size: 19px; font-weight: 700; text-anchor: middle; fill: #333; }
.st text { fill: #2fae45; font-weight: 700; stroke-width: 4px; }
.ic.gy { color: #75838f; }
.ic.br { color: #a98454; }
.ic.or { color: #f39a3c; }
.ic.bl { color: #4a96dc; }
.ic.tl { color: #5f9ab9; }
.ic.gn { color: #67b04c; }
.ic.pk { color: #e36f7f; }
.ic.vi { color: #a98bd6; }
.lb.brt text, .lb .br { fill: #6b5348; }
.lb.ol text { fill: #a3824d; }
.lb.or text { fill: #e67a20; }
.lb.bl text { fill: #2a77c8; }
.lb.tl text { fill: #437fa5; }
.lb.gn text { fill: #4a8a3f; }
.lb.pk text { fill: #d4566c; }
.lb.vi text { fill: #8f6fd0; }
.kk text { font-family: "Noto Sans", sans-serif; font-weight: 800; fill: #333; }

.paw { margin: 30px auto 0; }
address { margin-top: 32px; font: 700 18px/24.500px "Noto Sans", "Noto Sans CJK KR", sans-serif; text-align: center; }
.actions { display: flex; align-items: center; width: 220px; height: 53px; margin: 40px auto 0; padding-left: 16px; border-radius: 16px; background: #ff9a4f; color: #fff; }
.actions .call { margin: 0 27px 0 7px; }
.actions span:last-child { margin-left: 4px; }
.actions svg { margin-top: -2px; }

.info { display: flex; margin-top: 68px; height: 221px; border-bottom: 2px solid #ff9a4f; }
dl { display: grid; align-content: start; }
dt { color: #ff9a4f; font-weight: 700; }
dl.left { width: 370px; height: 191px; padding-left: 1px; grid-template-columns: 108px 1fr; row-gap: 20px; border-right: 2px solid #ff9a4f; }
dl.right { padding-left: 60px; grid-template-columns: 113px 1fr; row-gap: 21px; }
dl.left, dl.right { padding-top: 1px; }

.photos { height: 180px; padding: 17px 0 0 27px; border-bottom: 2px solid #ff9a4f; }
h2 { padding-left: 3px; font-size: 16px; line-height: 22px; font-weight: 600; color: #ff9a4f; }
.photo { display: grid; place-items: center; width: 145px; height: 100px; margin-top: 15px; background: #d9d9d9; font-weight: 700; }

.charts { display: flex; gap: 130px; height: 325px; padding: 43px 0 0 171px; border-bottom: 2px solid #ff9a4f; }
.donut { width: 240px; height: 240px; padding: 40px; border-radius: 50%; }
.like { background: conic-gradient(#ff9a4f 50%, #d9d9d9 0); }
.hate { background: conic-gradient(#ffc16e 25%, #d9d9d9 0); }
.hole { display: flex; flex-direction: column; align-items: center; width: 160px; height: 160px; padding-top: 19px; border-radius: 50%; background: #f8ebd8; }
.hate .hole { padding-top: 24px; }
.hole b { width: 86px; height: 86px; border-radius: 50%; background: #d9d9d9; line-height: 86px; text-align: center; }
.hole span { margin-top: 15px; color: #ff9a4f; font-weight: 600; }

.count { position: relative; height: 100px; margin-left: 1px; border-bottom: 3px solid #ffc16e; }
.note { font-size: 14px; line-height: 19px; letter-spacing: .7px; white-space: nowrap; }
.count .note { position: absolute; left: 101px; top: 24px; }
.total { padding-top: 29px; font-size: 30px; line-height: 41px; text-align: center; }
.total b { color: #ffc16e; }
.arc { position: absolute; left: 115px; top: 75px; }

.write { display: flex; gap: 64px; height: 60px; padding: 18px 0 0 11px; font-size: 18px; line-height: 25px; font-weight: 700; }
.write .hover { color: #ff9a4f; font-weight: 600; }
.defs { position: absolute; }

.score { width: 951px; height: 251px; margin-left: 1px; padding: 53px 0 0 21px; background: #f9f9f9; text-align: center; }
.cap, .num { font-weight: 700; }
.num { font-size: 40px; line-height: 54px; margin-top: 2px; }
.stars { display: flex; gap: 4px; color: #ffc16e; }
.stars svg { width: 24px; height: 23px; }
.stars .off { color: #d9d9d9; }
.stars.big { justify-content: center; gap: 6px; margin-top: 23px; }
.stars.big svg { width: 42px; height: 40px; }

.review { height: 152px; padding: 20px 0 0 31px; }
.who { display: flex; align-items: center; }
.who i { width: 40px; height: 40px; margin-right: 9px; border-radius: 50%; background: #d9d9d9; }
.who b { width: 121px; font-size: 18px; line-height: 25px; }
.review .stars { margin: 10px 0 0 1px; }
.review p { margin-top: 14px; line-height: 22px; white-space: nowrap; }

.book { display: flex; margin-top: 76px; padding-left: 386px; }
.btns { display: grid; gap: 37px; }
.btns a { width: 180px; height: 50px; border: 2px solid #ff9a4f; line-height: 46px; font-size: 18px; font-weight: 700; letter-spacing: 1.8px; text-align: center; color: #ff9a4f; }
.btns .full { background: #ff9a4f; color: #fff; }
.book svg { margin: 14px 0 0; }
.book .note { margin: 50px 0 0 9px; }

.footer { height: 619px; padding: 126px 0 0 30px; background: #1c1b20; color: #fff; }
.fword text { font-family: Inter, sans-serif; font-weight: 900; fill: #fff; stroke: #fff; stroke-width: 22px; stroke-linejoin: round; }
.footer h3, .footer p { margin-left: 27px; white-space: nowrap; }
.footer h3 { display: flex; align-items: center; gap: 18px; margin-top: 19px; font: bold 31px/44px "Liberation Serif", serif; letter-spacing: 2.4px; }
.addr { margin-top: 6px; font-size: 18px; line-height: 25px; font-weight: 300; letter-spacing: .57px; }
.links { display: flex; gap: 25px; margin-top: 30px; letter-spacing: .32px; }
.copy { margin-top: 59px; font: bold 34px/56px "Liberation Serif", serif; letter-spacing: 2px; color: #a0978c; }
```
